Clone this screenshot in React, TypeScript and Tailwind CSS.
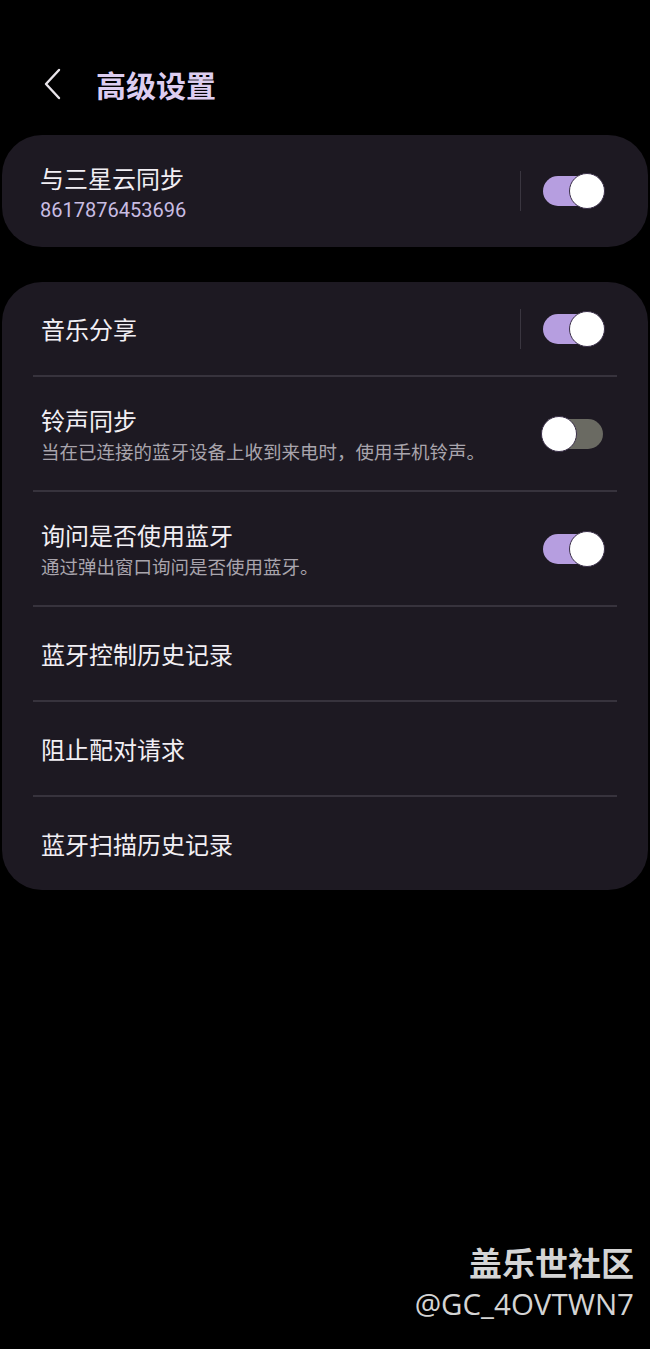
import React from 'react';

const font = { fontFamily: '"Noto Sans CJK SC", "Noto Sans", sans-serif' };

function Toggle({ on }: { on: boolean }) {
  return (
    <div
      className={`relative h-[30px] w-[60px] rounded-full ${
        on ? 'bg-[#b69ee0]' : 'bg-[#6a6a62]'
      }`}
    >
      <div
        className={`absolute top-[-3px] h-[36px] w-[36px] rounded-full border-[1.5px] border-[#3a2f48] bg-white ${
          on ? 'right-[-2px]' : 'left-[-2px]'
        }`}
      />
    </div>
  );
}

function Row({
  title,
  sub,
  toggle,
  divider,
  last,
}: {
  title: string;
  sub?: string;
  toggle?: 'on' | 'off';
  divider?: boolean;
  last?: boolean;
}) {
  return (
    <div
      className={`mx-[31px] flex items-center border-[#37333d] ${
        last ? 'h-[93px]' : 'border-b-2'
      } ${sub ? 'h-[115px]' : last ? '' : 'h-[95px]'}`}
    >
      <div className="flex flex-1 flex-col pl-[8px]">
        <span className="text-[24px] leading-[32px] text-[#f2eff4]">{title}</span>
        {sub && (
          <span className="mt-[2px] text-[18.5px] leading-[26px] text-[#a9a5ad]">
            {sub}
          </span>
        )}
      </div>
      {divider && <div className="mr-[22px] h-[40px] w-px bg-[#3a3640]" />}
      {toggle && (
        <div className="mr-[14px]">
          <Toggle on={toggle === 'on'} />
        </div>
      )}
    </div>
  );
}

export default function App() {
  return (
    <div className="min-h-[1349px] w-[650px] bg-black" style={font}>
      {/* Header */}
      <div className="flex h-[135px] items-center pl-[40px] pt-[32px]">
        <svg width="24" height="34" viewBox="0 0 24 34" className="mr-[32px]">
          <path
            d="M19 3 L6 17 L19 31"
            fill="none"
            stroke="#e8e4ea"
            strokeWidth="2.4"
            strokeLinecap="round"
            strokeLinejoin="round"
          />
        </svg>
        <span className="text-[30px] font-bold leading-none text-[#dccdf0]">高级设置</span>
      </div>

      {/* Samsung cloud card */}
      <div className="mx-[2px] flex h-[112px] items-center rounded-[40px] bg-[#1d1922] pr-[45px]">
        <div className="flex flex-1 flex-col pl-[38px] pt-[6px]">
          <span className="text-[24px] leading-[30px] text-[#f2eff4]">与三星云同步</span>
          <span
            className="mt-[2px] text-[20px] leading-[30px] text-[#c9bde2]"
            style={{ fontFamily: 'Roboto, "Noto Sans", sans-serif' }}
          >
            8617876453696
          </span>
        </div>
        <div className="mr-[22px] h-[40px] w-px bg-[#3a3640]" />
        <Toggle on />
      </div>

      {/* Settings card */}
      <div className="mx-[2px] mt-[35px] rounded-[40px] bg-[#1d1922]">
        <Row title="音乐分享" toggle="on" divider />
        <Row
          title="铃声同步"
          sub="当在已连接的蓝牙设备上收到来电时，使用手机铃声。"
          toggle="off"
        />
        <Row title="询问是否使用蓝牙" sub="通过弹出窗口询问是否使用蓝牙。" toggle="on" />
        <Row title="蓝牙控制历史记录" />
        <Row title="阻止配对请求" />
        <Row title="蓝牙扫描历史记录" last />
      </div>

      {/* Watermark */}
      <div className="mt-[351px] flex flex-col items-end pr-[16px]">
        <span className="text-[33px] font-bold leading-[42px] text-[#d4d4d4]">盖乐世社区</span>
        <span
          className="text-[29.5px] leading-[42px] text-[#d4d4d4]"
          style={{ fontFamily: '"Open Sans", "Noto Sans", sans-serif' }}
        >
          @GC_4OVTWN7
        </span>
      </div>
    </div>
  );
}
